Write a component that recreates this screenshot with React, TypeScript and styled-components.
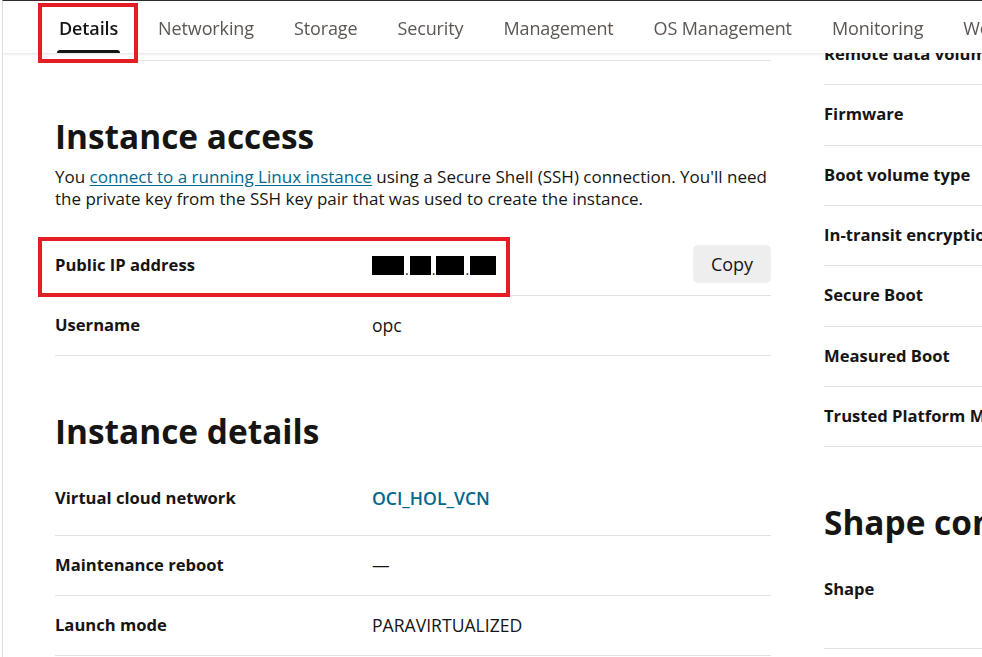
import styled, { createGlobalStyle } from "styled-components";

const GlobalStyle = createGlobalStyle`
  html, body {
    margin: 0;
    padding: 0;
    background: #ffffff;
    overflow: hidden;
  }
  body {
    font-family: "Open Sans", "Noto Sans", Arial, sans-serif;
    color: #161513;
  }
`;

const Frame = styled.div`
  position: relative;
  height: 656px;
  margin-left: 2px;
  border-top: 1px solid #312d2a;
  border-left: 1px solid #dedede;
  overflow: hidden;
`;

const TabBar = styled.nav`
  position: sticky;
  top: 0;
  z-index: 2;
  display: flex;
  height: 52px;
  padding-left: 36px;
  background: #ffffff;
  box-shadow: 0 1px 3px rgba(0, 0, 0, 0.12);
  white-space: nowrap;
`;

const Tab = styled.div<{ $active?: boolean }>`
  position: relative;
  display: flex;
  align-items: center;
  padding: 2px 20px 0;
  font-size: 18px;
  letter-spacing: -0.12px;
  font-weight: ${(p) => (p.$active ? 600 : 500)};
  color: ${(p) => (p.$active ? "#161513" : "#5b5652")};
  cursor: pointer;

  &::after {
    content: "";
    display: ${(p) => (p.$active ? "block" : "none")};
    position: absolute;
    left: 18px;
    right: 18px;
    bottom: 0;
    height: 3px;
    border-radius: 3px 3px 0 0;
    background: #161513;
  }
`;

const Highlight = styled.span<{ $top: number; $left: number; $width: string; $bottom: number }>`
  position: absolute;
  top: ${(p) => p.$top}px;
  left: ${(p) => p.$left}px;
  width: ${(p) => p.$width};
  bottom: ${(p) => p.$bottom}px;
  border: 4px solid #e31e24;
  box-sizing: border-box;
  pointer-events: none;
  z-index: 3;
`;

const Content = styled.main`
  display: flex;
  gap: 53px;
  margin-top: -52px;
  padding-left: 52px;
`;

const Column = styled.section<{ $offset: number }>`
  flex: 0 0 716px;
  padding-top: ${(p) => p.$offset}px;
`;

const Spacer = styled.div`
  height: 59px;
  border-bottom: 1px solid #e4e2e0;
`;

const Heading = styled.h2<{ $gap: number }>`
  margin: 53px 0 ${(p) => p.$gap}px;
  font-size: 33.4px;
  line-height: 44px;
  font-weight: 700;
  white-space: nowrap;
`;

const Text = styled.p`
  margin: 0 0 26px;
  font-size: 17px;
  line-height: 22px;
`;

const Link = styled.a`
  color: #00688c;
  text-decoration: underline;
  text-underline-offset: 2px;
`;

const Row = styled.div<{ $height?: number }>`
  position: relative;
  display: grid;
  grid-template-columns: 317px 1fr auto;
  align-items: start;
  box-sizing: border-box;
  min-height: ${(p) => p.$height ?? 60}px;
  padding-top: 18px;
  border-bottom: 1px solid #e4e2e0;
`;

const Label = styled.div`
  font-size: 16.6px;
  line-height: 22px;
  font-weight: 700;
  white-space: nowrap;
`;

const Value = styled.div<{ $link?: boolean }>`
  font-size: 17.6px;
  line-height: 22px;
  font-weight: ${(p) => (p.$link ? 600 : 400)};
  color: ${(p) => (p.$link ? "#00688c" : "#161513")};
  white-space: nowrap;
`;

const Redacted = styled.span`
  display: inline-flex;
  align-items: flex-end;
  gap: 1px;
  padding-top: 2px;
`;

const Block = styled.span<{ $w: number }>`
  display: inline-block;
  width: ${(p) => p.$w}px;
  height: 19px;
  background: #000000;
`;

const Dot = styled.span`
  font-size: 14px;
  line-height: 10px;
  color: #1a1a1a;
`;

const CopyButton = styled.button`
  margin-top: -9px;
  width: 78px;
  height: 38px;
  border: none;
  border-radius: 5px;
  background: #eeeeee;
  font-family: inherit;
  font-size: 18px;
  font-weight: 500;
  color: #161513;
  cursor: pointer;
`;

const leftRows = [
  { label: "Virtual cloud network", value: "OCI_HOL_VCN", link: true, height: 67 },
  { label: "Maintenance reboot", value: "—" },
  { label: "Launch mode", value: "PARAVIRTUALIZED" },
];

const rightRows = [
  "Remote data volumes",
  "Firmware",
  "Boot volume type",
  "In-transit encryption",
  "Secure Boot",
  "Measured Boot",
  "Trusted Platform Module",
];

const tabs = ["Details", "Networking", "Storage", "Security", "Management", "OS Management", "Monitoring", "Work requests"];

export default function App() {
  return (
    <>
      <GlobalStyle />
      <Frame>
        <TabBar>
          {tabs.map((t, i) => (
            <Tab key={t} $active={i === 0}>
              {t}
              {i === 0 && <Highlight $top={2} $left={-1} $width="100px" $bottom={-10} />}
            </Tab>
          ))}
        </TabBar>

        <Content>
          <Column $offset={0}>
            <Spacer />
            <Heading $gap={8}>Instance access</Heading>
            <Text>
              You <Link href="#">connect to a running Linux instance</Link> using a Secure Shell (SSH) connection. You'll need
              the private key from the SSH key pair that was used to create the instance.
            </Text>
            <Row>
              <Label>Public IP address</Label>
              <Value>
                <Redacted>
                  <Block $w={32} />
                  <Dot>.</Dot>
                  <Block $w={21} />
                  <Dot>.</Dot>
                  <Block $w={28} />
                  <Dot>.</Dot>
                  <Block $w={26} />
                </Redacted>
              </Value>
              <CopyButton>Copy</CopyButton>
              <Highlight $top={1} $left={-17} $width="472px" $bottom={-2} />
            </Row>
            <Row>
              <Label>Username</Label>
              <Value>opc</Value>
            </Row>

            <Heading $gap={16}>Instance details</Heading>
            {leftRows.map((r) => (
              <Row key={r.label} $height={r.height}>
                <Label>{r.label}</Label>
                <Value $link={r.link}>{r.value}</Value>
              </Row>
            ))}
          </Column>

          <Column $offset={24}>
            {rightRows.map((r) => (
              <Row key={r} $height={60.33}>
                <Label>{r}</Label>
                <Value>Enabled</Value>
              </Row>
            ))}
            <Heading $gap={16}>Shape configuration</Heading>
            <Row $height={89}>
              <Label>Shape</Label>
              <Value>VM.Standard.E2.1.Micro</Value>
            </Row>
          </Column>
        </Content>
      </Frame>
    </>
  );
}
